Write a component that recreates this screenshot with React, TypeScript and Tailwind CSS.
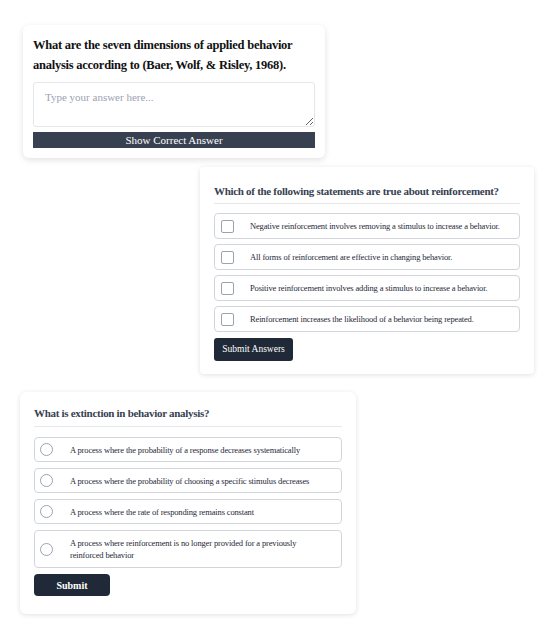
import { useState } from 'react';

const checkOptions = [
  'Negative reinforcement involves removing a stimulus to increase a behavior.',
  'All forms of reinforcement are effective in changing behavior.',
  'Positive reinforcement involves adding a stimulus to increase a behavior.',
  'Reinforcement increases the likelihood of a behavior being repeated.',
];

const radioOptions = [
  'A process where the probability of a response decreases systematically',
  'A process where the probability of choosing a specific stimulus decreases',
  'A process where the rate of responding remains constant',
  'A process where reinforcement is no longer provided for a previously reinforced behavior',
];

export default function App() {
  const [answer, setAnswer] = useState('');
  const [checked, setChecked] = useState<boolean[]>([false, false, false, false]);
  const [selected, setSelected] = useState<number | null>(null);

  const toggle = (i: number) => {
    const next = [...checked];
    next[i] = !next[i];
    setChecked(next);
  };

  return (
    <div className="w-[540px] h-[620px] bg-white flex flex-col font-['Liberation_Serif',serif] text-black overflow-hidden">
      {/* Open answer */}
      <div className="ml-[23px] mt-[25px] w-[302px] bg-white rounded-md shadow-[0_2px_6px_rgba(0,0,0,0.12)] p-[10px]">
        <h2 className="text-[12.5px] leading-[20px] tracking-[-0.25px] font-bold text-[#111]">
          What are the seven dimensions of applied behavior analysis according to (Baer, Wolf, &amp; Risley, 1968).
        </h2>
        <textarea
          value={answer}
          onChange={(e) => setAnswer(e.target.value)}
          placeholder="Type your answer here..."
          className="mt-[7px] block w-full h-[45px] border border-[#e5e7eb] rounded-[3px] px-[11px] py-[6px] text-[11px] leading-[16px] placeholder:text-[#9ca3af] outline-none"
        />
        <button className="mt-[5px] block w-full h-[16px] bg-[#374151] text-white text-[11px] leading-[16px]">
          Show Correct Answer
        </button>
      </div>

      {/* Multiple select */}
      <div className="ml-[200px] mt-[9px] w-[334px] bg-white rounded-sm shadow-[0_1px_5px_rgba(0,0,0,0.12)] pt-[16px] px-[14px] pb-[13px]">
        <h3 className="text-[11px] leading-[16px] tracking-[-0.3px] font-bold text-[#374151] pb-[4px] border-b border-[#e5e7eb]">
          Which of the following statements are true about reinforcement?
        </h3>
        <div className="mt-[9px] flex flex-col gap-[5px]">
          {checkOptions.map((opt, i) => (
            <label
              key={i}
              onClick={() => toggle(i)}
              className="h-[26px] flex items-center border border-[#d1d5db] rounded-[4px] pl-[6px] cursor-pointer"
            >
              <span
                className={`w-[13px] h-[13px] rounded-[2px] border border-[#9ca3af] shrink-0 ${checked[i] ? 'bg-[#1f2937]' : 'bg-white'}`}
              />
              <span className="ml-[16px] text-[8.5px] leading-[12px] tracking-[-0.15px] text-[#1f2937]">{opt}</span>
            </label>
          ))}
        </div>
        <button className="mt-[6px] w-[79px] h-[23px] bg-[#1f2937] rounded-[3px] text-white text-[9.5px]">
          Submit Answers
        </button>
      </div>

      {/* Single choice */}
      <div className="ml-[20px] mt-[18px] w-[336px] bg-white rounded-md shadow-[0_1px_5px_rgba(0,0,0,0.12)] pt-[12px] px-[14px] pb-[18px]">
        <h3 className="text-[11px] leading-[18px] tracking-[-0.3px] font-bold text-[#374151] pb-[4px] border-b border-[#e5e7eb]">
          What is extinction in behavior analysis?
        </h3>
        <div className="mt-[10px] flex flex-col gap-[6px]">
          {radioOptions.map((opt, i) => (
            <label
              key={i}
              onClick={() => setSelected(i)}
              className={`${i === 3 ? 'h-[38px]' : 'h-[25px]'} flex items-center border border-[#d1d5db] rounded-[4px] pl-[5px] pr-[10px] cursor-pointer`}
            >
              <span
                className={`w-[13px] h-[13px] rounded-full border border-[#9ca3af] shrink-0 ${selected === i ? 'bg-[#1f2937]' : 'bg-white'}`}
              />
              <span className="ml-[17px] text-[8.5px] leading-[12px] tracking-[-0.15px] text-[#1f2937]">{opt}</span>
            </label>
          ))}
        </div>
        <button className="mt-[6px] w-[76px] h-[22px] bg-[#1f2937] rounded-[4px] text-white text-[10px] font-bold">
          Submit
        </button>
      </div>
    </div>
  );
}
